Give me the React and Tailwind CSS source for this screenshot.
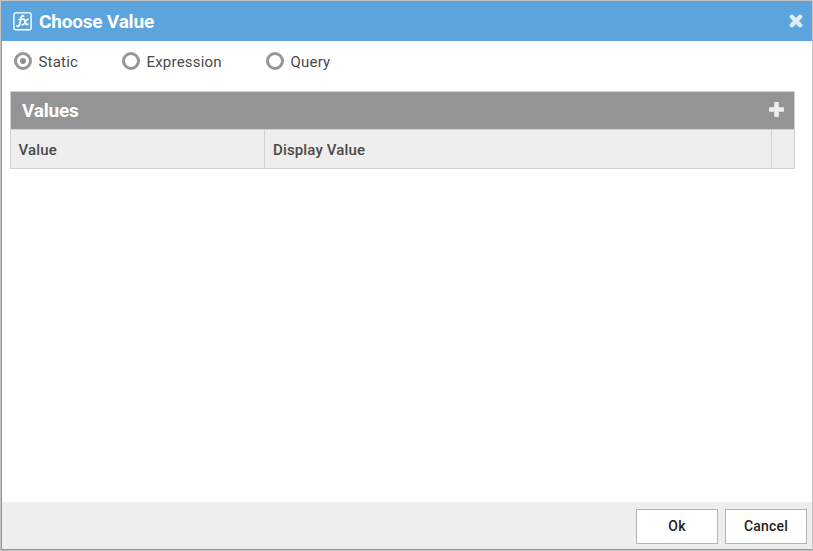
import React from "react";

function FxIcon() {
  return (
    <svg width="19" height="19" viewBox="0 0 19 19" fill="none" stroke="#fff" strokeLinecap="round">
      <rect x="0.9" y="0.9" width="17.2" height="16.8" rx="1.8" strokeWidth="1.4" />
      <path d="M10.6 4.2C9.2 3.1 8.3 4.3 7.9 6.2L6.6 12.3C6.2 14.2 5.2 14.8 3.9 14" strokeWidth="1.8" />
      <path d="M5.5 7.3H10" strokeWidth="1.3" />
      <path d="M10 7.3C11.6 6.7 11.9 8.6 12.3 10C12.7 11.8 13.2 13.2 14.8 12.3" strokeWidth="1.8" />
      <path d="M15.2 7.3C13.4 6.9 12.7 9.2 12.1 10.2C11.4 11.8 10.6 13.2 9.1 12.5" strokeWidth="1.4" />
    </svg>
  );
}

function CloseIcon() {
  return (
    <svg className="ml-auto" width="14" height="14" viewBox="0 0 14 14" stroke="#deedf9" strokeWidth="4.4" strokeLinecap="round">
      <path d="M2.8 2.8L11.2 11.2M11.2 2.8L2.8 11.2" />
    </svg>
  );
}

function PlusIcon() {
  return (
    <svg className="mb-[3px]" width="15" height="15" viewBox="0 0 15 15" fill="#eee">
      <rect x="5.2" y="0" width="4.6" height="15" rx="0.8" />
      <rect x="0" y="5.2" width="15" height="4.6" rx="0.8" />
    </svg>
  );
}

function Radio({ label, checked, className }) {
  return (
    <label className={`flex items-center ${className}`}>
      <span className="flex h-[18px] w-[18px] items-center justify-center rounded-full border-3 border-[#969696]">
        {checked && <span className="h-1.5 w-1.5 rounded-full bg-[#909090]" />}
      </span>
      <span className="ml-[6.5px] pt-0.5 text-[15px] leading-5 tracking-[0.2px]">{label}</span>
    </label>
  );
}

function Button({ children }) {
  return (
    <button className="h-[35px] w-[82px] border border-[#b4b4b4] bg-white pb-px text-sm font-medium tracking-[0.2px] text-[#222]">
      {children}
    </button>
  );
}

export default function App() {
  return (
    <div className="h-[551px] w-[813px] border border-[#c3c3c3] font-['Roboto',sans-serif] text-[#4a4a4a]">
      <div className="flex h-full flex-col border-b border-l border-[#5ba4de] bg-white">
        <header className="flex h-10 shrink-0 items-center bg-[#5ba4de] pl-[11px] pr-[9px] text-white">
          <FxIcon />
          <h1 className="ml-[7px] pt-0.5 text-[19px] font-bold leading-6 tracking-[-0.2px]">Choose Value</h1>
          <CloseIcon />
        </header>

        <div className="flex h-[50px] shrink-0 pl-3">
          <Radio label="Static" checked className="h-10 w-[108px]" />
          <Radio label="Expression" className="h-10 w-[144px]" />
          <Radio label="Query" className="h-10" />
        </div>

        <main className="flex-1 pl-2">
          <section className="w-[785px] border border-[#d3d3d3]">
            <div className="flex h-[37px] items-center justify-between bg-[#949494] pl-[11px] pr-[10px] text-white">
              <h2 className="text-[19px] font-bold leading-6 tracking-[-0.2px]">Values</h2>
              <PlusIcon />
            </div>
            <div className="grid h-[39px] grid-cols-[254px_507px_22px] border-t border-[#d3d3d3] bg-[#eee] text-[15px] font-medium tracking-[0.15px]">
              <div className="flex items-center border-r border-[#d3d3d3] pl-[7.5px] pt-0.5">Value</div>
              <div className="flex items-center border-r border-[#d3d3d3] pl-2 pt-0.5">Display Value</div>
              <div />
            </div>
          </section>
        </main>

        <footer className="flex h-[47px] shrink-0 items-start justify-end gap-[7px] bg-[#eee] pr-[5px] pt-[7px]">
          <Button>Ok</Button>
          <Button>Cancel</Button>
        </footer>
      </div>
    </div>
  );
}
